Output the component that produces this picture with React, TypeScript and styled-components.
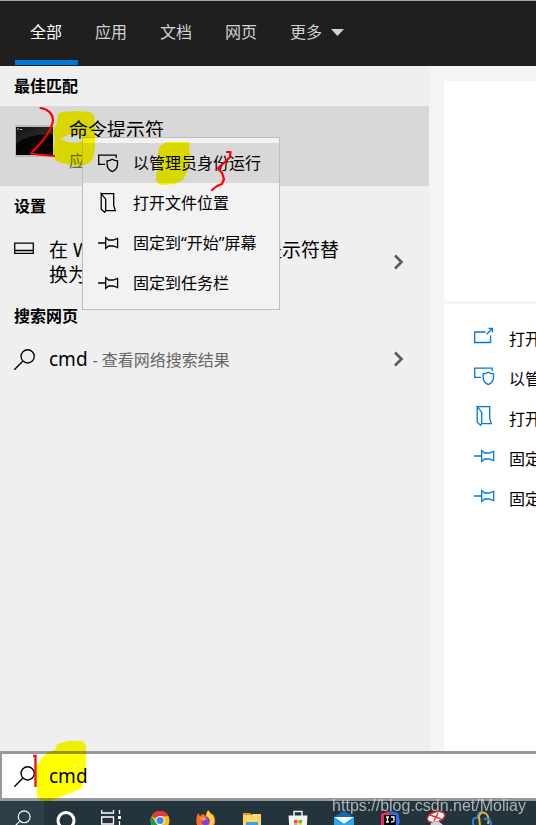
import React from "react";
import styled, { createGlobalStyle } from "styled-components";

const GlobalStyle = createGlobalStyle`
  *, *::before, *::after { box-sizing: border-box; }
  body {
    margin: 0;
    background: #efefef;
    color: #000;
    font-family: "Noto Sans", "Noto Sans CJK SC", sans-serif;
    font-size: 16px;
    line-height: 24px;
  }
  button, input { font: inherit; color: inherit; }
`;

const Page = styled.div`
  display: flex;
  flex-direction: column;
  height: 100vh;
  overflow: hidden;
`;

const TabBar = styled.nav`
  display: flex;
  flex: none;
  gap: 2px;
  height: 66px;
  padding: 0 15px 1px;
  border-top: 1px solid #a3a3a3;
  background: #1f1f1f;
`;

const Tab = styled.button<{ $active?: boolean }>`
  display: flex;
  align-items: center;
  gap: 9px;
  padding: 3px 16px 0 15px;
  border: 0;
  border-bottom: 5px solid ${(p) => (p.$active ? "#0078d7" : "transparent")};
  background: none;
  color: ${(p) => (p.$active ? "#fff" : "#d2d2d2")};
  white-space: nowrap;
`;

const Body = styled.main`
  position: relative;
  display: flex;
  flex: 1;
  min-height: 0;
  background: #f4f4f4;
`;

const Results = styled.section`
  flex: 0 0 429px;
  background: #efefef;
`;

const SectionTitle = styled.h2`
  margin: 0;
  padding: 0 14px;
  font-size: 16px;
  font-weight: 700;
  line-height: 40px;
`;

const BestMatch = styled.button`
  display: flex;
  gap: 16px;
  width: 100%;
  height: 80px;
  padding: 10px 15px;
  border: 0;
  background: #d8d8d8;
  text-align: left;
`;

const Thumb = styled.svg`
  flex: none;
  width: 38px;
  height: 32px;
  margin-top: 9px;
`;

const Title = styled.span`
  display: block;
  padding-top: 2px;
  font-size: 19px;
  line-height: 25px;
`;

const Subtitle = styled.span`
  display: block;
  padding-top: 6px;
  color: #666;
`;

const ResultRow = styled.button<{ $tall?: boolean }>`
  display: flex;
  align-items: center;
  gap: 14px;
  width: 100%;
  height: ${(p) => (p.$tall ? 70 : 46)}px;
  padding: ${(p) => (p.$tall ? 2 : 0)}px 24px 0 14px;
  border: 0;
  background: none;
  text-align: left;
  white-space: nowrap;

  & > :first-child {
    align-self: ${(p) => (p.$tall ? "flex-start" : "center")};
    margin-top: ${(p) => (p.$tall ? 8 : 0)}px;
  }
  & > :last-child { margin-left: auto; }
`;

const Hint = styled.span`
  color: #666;
  font-size: 16px;
`;

const Icon = styled.svg`
  flex: none;
  fill: none;
  stroke: currentColor;
  stroke-width: 1.3;
  overflow: visible;
`;

const Menu = styled.div`
  position: absolute;
  top: 71px;
  left: 82px;
  width: 198px;
  padding: 5px 0 6px;
  border: 1px solid #bdbdbd;
  background: #f2f2f2;
`;

const MenuItem = styled.button<{ $active?: boolean }>`
  display: flex;
  align-items: center;
  gap: 14px;
  width: 100%;
  height: 40px;
  padding: 0 15px;
  border: 0;
  background: ${(p) => (p.$active ? "#d8d8d8" : "none")};
  white-space: nowrap;
`;

const Details = styled.aside`
  flex: 1;
  min-width: 0;
  margin: 15px 0 0 15px;
  overflow: hidden;
  background: #fff;
`;

const Preview = styled.div`
  height: 223px;
  border-bottom: 3px solid #f4f4f4;
`;

const Actions = styled.div`
  padding: 15px 0 0 30px;
`;

const Action = styled.button`
  display: flex;
  align-items: center;
  gap: 14px;
  height: 40px;
  padding: 0;
  border: 0;
  background: none;
  white-space: nowrap;

  & > svg { color: #0078d7; margin-bottom: 6px; }
`;

const SearchBar = styled.label`
  position: relative;
  display: flex;
  flex: none;
  align-items: center;
  gap: 14px;
  height: 50px;
  padding-left: 12px;
  border: solid #989898;
  border-width: 3px 0 3px 2px;
  background: #fff;
`;

const SearchInput = styled.input`
  flex: 1;
  min-width: 0;
  padding: 0;
  border: 0;
  outline: 0;
  background: none;
  font-size: 19px;
`;

const Marks = styled.svg<{ $multiply?: boolean }>`
  position: absolute;
  top: 0;
  left: 0;
  width: 1px;
  height: 1px;
  overflow: visible;
  pointer-events: none;
  mix-blend-mode: ${(p) => (p.$multiply ? "multiply" : "normal")};
`;

const Taskbar = styled.footer`
  position: relative;
  display: flex;
  flex: none;
  height: 24px;
  background: #23343d;
`;

const TaskButton = styled.button<{ $wide?: boolean; $active?: boolean }>`
  display: flex;
  justify-content: center;
  align-items: flex-start;
  flex: none;
  width: ${(p) => (p.$wide ? 46 : 44)}px;
  padding: 9px 0 0;
  border: 0;
  overflow: hidden;
  background: ${(p) => (p.$active ? "#2d404a" : "none")};

  &:nth-child(4) { margin-left: 3px; }
`;

const Watermark = styled.span`
  position: absolute;
  right: 10px;
  bottom: 7px;
  color: rgba(215, 220, 222, 0.75);
  font-family: "Liberation Sans", sans-serif;
  font-size: 16px;
  line-height: 24px;
`;

const Magnifier = () => (
  <Icon width="21" height="21" viewBox="0 0 20 20" aria-hidden>
    <circle cx="13" cy="7" r="6.3" />
    <path d="M8.5 11.5 0.3 19.7" />
  </Icon>
);

const AdminIcon = () => (
  <Icon width="21" height="20" viewBox="0 0 21 20" aria-hidden>
    <path d="M7 11.3H.7V2.2H18.2V5" />
    <path d="M14.3 6.2c1.6 1.2 3.2 1.6 5.2 1.6v3.6c0 3.3-2.4 5.8-5.2 7.2-2.8-1.4-5.2-3.9-5.2-7.2V7.8c2 0 3.6-.4 5.2-1.6Z" />
  </Icon>
);

const FolderIcon = () => (
  <Icon width="21" height="20" viewBox="0 0 21 20" aria-hidden>
    <path d="M3.2.7H15.7V12.5L17.3 17.6H7.7M3.2.7V16.2L6.6 19.3 7.7 17.6V6.2L3.2.7Z" />
  </Icon>
);

const PinIcon = () => (
  <Icon width="21" height="12" viewBox="0 0 21 12" aria-hidden>
    <path d="M0 6H7.7M7.7.6V11.4L10.6 9H15.2L19.6 10.5V1.5L15.2 3H10.6L7.7.6Z" />
  </Icon>
);

const OpenIcon = () => (
  <Icon width="21" height="18" viewBox="0 0 21 18" aria-hidden>
    <path d="M11.5 5H.7V15.5H16.6V8.5M12.6 7.2 18 1.8M14.5 1.4H18.4V5.5" />
  </Icon>
);

const Chevron = () => (
  <Icon width="12" height="16" viewBox="0 0 12 16" aria-hidden>
    <path d="M2 1.5 8.5 8 2 14.5" stroke="#5a5a5a" strokeWidth="2.6" />
  </Icon>
);

const App = () => (
  <>
    <GlobalStyle />
    <Page>
      <TabBar>
        <Tab $active>全部</Tab>
        <Tab>应用</Tab>
        <Tab>文档</Tab>
        <Tab>网页</Tab>
        <Tab>
          更多
          <svg width="13" height="7" viewBox="0 0 13 7" aria-hidden>
            <path d="M0 0H13L6.5 7Z" fill="#d2d2d2" />
          </svg>
        </Tab>
      </TabBar>

      <Body>
        <Results>
          <SectionTitle>最佳匹配</SectionTitle>
          <BestMatch>
            <Thumb viewBox="0 0 38 32" aria-hidden>
              <defs>
                <linearGradient id="screen" x1="0" y1="0" x2="1" y2="1">
                  <stop offset="0" stopColor="#111" />
                  <stop offset="1" stopColor="#3a3a3a" />
                </linearGradient>
              </defs>
              <rect width="38" height="32" fill="#b4bcc4" />
              <rect y="2" x="1" width="37" height="28" fill="#050505" />
              <path d="M1 19C8 12 22 9 38 9V2H1Z" fill="url(#screen)" />
              <path d="M2 4H4M5 4.5H7" stroke="#ccc" />
            </Thumb>
            <span>
              <Title>命令提示符</Title>
              <Subtitle>应用</Subtitle>
            </span>
          </BestMatch>

          <SectionTitle>设置</SectionTitle>
          <ResultRow $tall>
            <Icon width="21" height="25" viewBox="0 0 21 25" aria-hidden>
              <path d="M.7 7.2H19.3V17.3H.7ZM.7 14.5H19.3" />
            </Icon>
            <Title>
              在 Win + X 菜单中将 命令提示符替
              <br />
              换为 PowerShell
            </Title>
            <Chevron />
          </ResultRow>

          <SectionTitle>搜索网页</SectionTitle>
          <ResultRow>
            <Magnifier />
            <Title>
              cmd <Hint>- 查看网络搜索结果</Hint>
            </Title>
            <Chevron />
          </ResultRow>
        </Results>

        <Details>
          <Preview />
          <Actions>
            <Action><OpenIcon />打开</Action>
            <Action><AdminIcon />以管理员身份运行</Action>
            <Action><FolderIcon />打开文件位置</Action>
            <Action><PinIcon />固定到“开始”屏幕</Action>
            <Action><PinIcon />固定到任务栏</Action>
          </Actions>
        </Details>

        <Menu role="menu">
          <MenuItem role="menuitem" $active><AdminIcon />以管理员身份运行</MenuItem>
          <MenuItem role="menuitem"><FolderIcon />打开文件位置</MenuItem>
          <MenuItem role="menuitem"><PinIcon />固定到“开始”屏幕</MenuItem>
          <MenuItem role="menuitem"><PinIcon />固定到任务栏</MenuItem>
        </Menu>

        <Marks $multiply aria-hidden>
          <g transform="translate(0 -66)" fill="#ff0" fillRule="evenodd">
            <path d="M58 114 62 112 75 111 90 112 94 115 95 125V148L93 158 88 164 80 166 70 165 58 162 53 157V149L55 141 53 131 57 122ZM60 139 68 135 75 133 82 136 83 141 75 143 67 142Z" />
            <path d="M160 146 167 142H189L190 158 188 170 183 180 175 184 160 185 156 181 157 165 158 152Z" />
          </g>
        </Marks>
        <Marks aria-hidden>
          <g transform="translate(0 -66)" fill="none" stroke="#f00" strokeWidth="2.2" strokeLinecap="round" strokeLinejoin="round">
            <path d="M40.500 108C48 109 53 114 53 120 52 130 42 142 38 146L31 153.500 38 154.500 54 156" />
            <path d="M227 152H230.500L230 157 225 162 218 168 222 173 224 179 222 184 217 186 212 190" />
          </g>
        </Marks>
      </Body>

      <SearchBar>
        <Magnifier />
        <SearchInput aria-label="搜索" defaultValue="cmd" />
        <Marks $multiply aria-hidden>
          <path
            transform="translate(-2 -754)"
            fill="#ff0"
            fillRule="evenodd"
            d="M57 744 68 741H82L86 745V768L83 785 82 788 73 792 57 798 50 801H43L37 797V765L41 759 47 753 55 750ZM74 764 76 766 74 768Z"
          />
        </Marks>
        <Marks aria-hidden>
          <path transform="translate(-2 -754)" d="M33 756H35.500V787" fill="none" stroke="#f0141e" strokeWidth="2.400" />
        </Marks>
      </SearchBar>

      <Taskbar>
        <TaskButton $active aria-label="搜索">
          <Icon width="17" height="17" viewBox="0 0 20 20" color="#fff">
            <circle cx="12" cy="8" r="7" />
            <path d="M7 13 0 20" />
          </Icon>
        </TaskButton>
        <TaskButton aria-label="Cortana">
          <svg width="20" height="20" viewBox="0 0 20 20">
            <circle cx="10" cy="10.500" r="8" fill="none" stroke="#fff" strokeWidth="3" />
          </svg>
        </TaskButton>
        <TaskButton $wide aria-label="任务视图">
          <Icon width="20" height="20" viewBox="0 0 20 20" color="#fff">
            <path d="M.7 0V3H12.500V0M.7 7H12.500V14H.7ZM.7 20V17H12.500V20M18.500 0V4M18.500 11V20" />
            <path d="M17 6H20V9H17Z" fill="#fff" stroke="none" />
          </Icon>
        </TaskButton>
        <TaskButton $wide aria-label="Chrome">
          <svg width="20" height="20" viewBox="0 0 20 20">
            <circle cx="10" cy="10.500" r="9.500" fill="#fbc116" />
            <path d="M10 10.500 1.500 6.200A9.500 9.500 0 0 1 18.500 6.200H10Z" fill="#e33b2e" />
            <path d="M10 20A9.500 9.500 0 0 1 1.500 6.200L6.200 13Z" fill="#229a4a" />
            <circle cx="10" cy="10.500" r="4.600" fill="#fff" />
            <circle cx="10" cy="10.500" r="3.600" fill="#4286f5" />
          </svg>
        </TaskButton>
        <TaskButton $wide aria-label="Firefox">
          <svg width="20" height="20" viewBox="0 0 20 20">
            <path d="M2 3 4 6 7 4 10 6 11 1 15 5 17 4C22 12 18 20 10 20-1 20-1 10 2 3Z" fill="#ff6b2c" />
            <path d="M12 0 17 6C20 12 17 17 13 17L14 10 10 5Z" fill="#ffd43a" />
            <circle cx="9.500" cy="11" r="4.300" fill="#7446d8" />
            <path d="M3 8 8 7 11 9 7 11Z" fill="#ff9b24" />
          </svg>
        </TaskButton>
        <TaskButton $wide aria-label="文件资源管理器">
          <svg width="20" height="20" viewBox="0 0 20 20">
            <path d="M1 3H8L10 5H1Z" fill="#e09a10" />
            <path d="M1 5H9L11 4H19V20H1Z" fill="#ffd66a" />
            <path d="M4 20V12H16V20H12V16H8V20Z" fill="#3a9fe5" />
          </svg>
        </TaskButton>
        <TaskButton $wide aria-label="Microsoft Store">
          <svg width="20" height="20" viewBox="0 0 20 20">
            <path d="M6 6V1.500H14V6" fill="none" stroke="#eee" strokeWidth="1.500" />
            <path d="M.5 5.500H19.500L18.500 20H1.500Z" fill="#f4f4f4" />
            <path d="M6 10H9.500V13.500H6Z" fill="#f25022" />
            <path d="M10.500 10H14V13.500H10.500Z" fill="#7fba00" />
            <path d="M6 14.500H9.500V18H6Z" fill="#00a4ef" />
            <path d="M10.500 14.500H14V18H10.500Z" fill="#ffb900" />
          </svg>
        </TaskButton>
        <TaskButton $wide aria-label="邮件">
          <svg width="20" height="20" viewBox="0 0 20 20">
            <path d="M0 7 10 1 20 7V20H0Z" fill="#1268b8" />
            <path d="M0 7H20L10 14Z" fill="#fff" />
            <path d="M0 7 10 14 20 7V20H0Z" fill="#2aa5ee" />
          </svg>
        </TaskButton>
        <TaskButton $wide aria-label="IntelliJ IDEA">
          <svg width="20" height="20" viewBox="0 0 20 20">
            <path d="M1 4 9 1 13 8 8 20H1Z" fill="#e62d68" />
            <path d="M10 1 18 3 20 12 15 20H8Z" fill="#2870e8" />
            <rect x="4" y="5" width="12" height="12" fill="#000" />
            <path d="M6 7H9M7.500 7V12M6 12H9M11 7H14V10.500Q14 12 11 12" fill="none" stroke="#fff" strokeWidth="1.300" />
          </svg>
        </TaskButton>
        <TaskButton $wide aria-label="Snipping">
          <svg width="20" height="20" viewBox="0 0 20 20">
            <ellipse cx="10" cy="7" rx="9" ry="5" fill="#fff" stroke="#e32c35" strokeWidth="1.500" transform="rotate(-18 10 7)" />
            <path d="M4 5 15 9M12 3 8 11" stroke="#e32c35" strokeWidth="1.500" />
            <path d="M3 20 5 13 12 11 17 15 16 20Z" fill="#c8d4da" />
          </svg>
        </TaskButton>
        <TaskButton $wide aria-label="Navicat">
          <svg width="20" height="20" viewBox="0 0 20 20" fill="none" strokeWidth="2">
            <path d="M2 16C-1 10 2 7 6 8 5 3 9 1 11 3" stroke="#2d7fe0" />
            <path d="M8 16 7 6Q9 1 13 3 18 6 16 14" stroke="#e0b62e" />
            <path d="M12 9Q18 7 19 14L17 19" stroke="#2d7fe0" />
          </svg>
        </TaskButton>
        <Watermark>https://blog.csdn.net/Moliay</Watermark>
      </Taskbar>
    </Page>
  </>
);

export default App;
